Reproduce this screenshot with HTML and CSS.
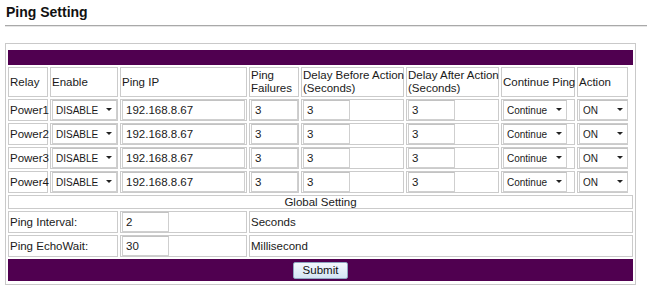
FILE: index.html
```html
<!DOCTYPE html>
<html lang="en">
<head>
    <meta charset="UTF-8">
    <title>Ping Setting</title>
    <link rel="stylesheet" href="styles.css">
</head>
<body>
<div class="page-title">Ping Setting</div>
<form class="panel">
    <table class="ping-table">
        <colgroup>
            <col class="c-relay">
            <col class="c-enable">
            <col class="c-ip">
            <col class="c-fail">
            <col class="c-before">
            <col class="c-after">
            <col class="c-cont">
            <col class="c-action">
            <col class="c-edge">
        </colgroup>
        <tr><td class="bar bar-top" colspan="9"></td></tr>
        <tr class="head">
            <th>Relay</th>
            <th>Enable</th>
            <th>Ping IP</th>
            <th>Ping<br>Failures</th>
            <th>Delay Before Action<br>(Seconds)</th>
            <th>Delay After Action<br>(Seconds)</th>
            <th>Continue Ping</th>
            <th>Action</th>
        </tr>
        <tr>
            <td>Power1</td>
            <td><span class="pick pick-enable"><select><option>DISABLE</option><option>ENABLE</option></select></span></td>
            <td><input class="ip" type="text" value="192.168.8.67"></td>
            <td><input class="num" type="text" value="3"></td>
            <td><input class="num" type="text" value="3"></td>
            <td><input class="num" type="text" value="3"></td>
            <td><span class="pick pick-cont"><select><option>Continue</option><option>Stop</option></select></span></td>
            <td><span class="pick pick-action"><select><option>ON</option><option>OFF</option></select></span></td>
        </tr>
        <tr>
            <td>Power2</td>
            <td><span class="pick pick-enable"><select><option>DISABLE</option><option>ENABLE</option></select></span></td>
            <td><input class="ip" type="text" value="192.168.8.67"></td>
            <td><input class="num" type="text" value="3"></td>
            <td><input class="num" type="text" value="3"></td>
            <td><input class="num" type="text" value="3"></td>
            <td><span class="pick pick-cont"><select><option>Continue</option><option>Stop</option></select></span></td>
            <td><span class="pick pick-action"><select><option>ON</option><option>OFF</option></select></span></td>
        </tr>
        <tr>
            <td>Power3</td>
            <td><span class="pick pick-enable"><select><option>DISABLE</option><option>ENABLE</option></select></span></td>
            <td><input class="ip" type="text" value="192.168.8.67"></td>
            <td><input class="num" type="text" value="3"></td>
            <td><input class="num" type="text" value="3"></td>
            <td><input class="num" type="text" value="3"></td>
            <td><span class="pick pick-cont"><select><option>Continue</option><option>Stop</option></select></span></td>
            <td><span class="pick pick-action"><select><option>ON</option><option>OFF</option></select></span></td>
        </tr>
        <tr>
            <td>Power4</td>
            <td><span class="pick pick-enable"><select><option>DISABLE</option><option>ENABLE</option></select></span></td>
            <td><input class="ip" type="text" value="192.168.8.67"></td>
            <td><input class="num" type="text" value="3"></td>
            <td><input class="num" type="text" value="3"></td>
            <td><input class="num" type="text" value="3"></td>
            <td><span class="pick pick-cont"><select><option>Continue</option><option>Stop</option></select></span></td>
            <td><span class="pick pick-action"><select><option>ON</option><option>OFF</option></select></span></td>
        </tr>
        <tr><td class="section" colspan="9">Global Setting</td></tr>
        <tr>
            <td colspan="2">Ping Interval:</td>
            <td><input class="num" type="text" value="2"></td>
            <td colspan="6">Seconds</td>
        </tr>
        <tr>
            <td colspan="2">Ping EchoWait:</td>
            <td><input class="num" type="text" value="30"></td>
            <td colspan="6">Millisecond</td>
        </tr>
        <tr><td class="bar bar-bottom" colspan="9"><button type="button" class="submit">Submit</button></td></tr>
    </table>
</form>
</body>
</html>
```
FILE: styles.css
```css
body {
    margin: 0;
    background-color: #ffffff;
    color: #1a1a1a;
    font-family: "Liberation Sans", Arial, sans-serif;
    font-size: 11.5px;
}
.page-title {
    margin-left: 5px;
    padding: 4px 0 5px 1px;
    font-size: 14px;
    font-weight: bold;
    line-height: 16px;
    color: #111;
    border-bottom: 1px solid #a9a9a9;
    box-shadow: 0 1px 0 #e6e6e6;
}
.panel {
    width: 631px;
    box-sizing: border-box;
    margin: 17px 0 0 5px;
    padding: 4px 0 1px;
    border: 1px solid #c9c9c9;
}
.ping-table {
    width: 629px;
    table-layout: fixed;
    border-spacing: 2px;
}
.c-relay { width: 40px; }
.c-enable { width: 68px; }
.c-ip { width: 127px; }
.c-fail { width: 50px; }
.c-before { width: 103px; }
.c-after { width: 93px; }
.c-cont { width: 74px; }
.c-action { width: 51px; }
.c-edge { width: 3px; }

.ping-table th,
.ping-table td {
    padding: 0 1px;
    border: 1px solid #cbcbcb;
    text-align: left;
    font-weight: normal;
    white-space: nowrap;
    overflow: visible;
    vertical-align: middle;
}
.ping-table td {
    height: 20px;
    line-height: 14px;
}
.ping-table .head th {
    height: 28px;
    line-height: 13px;
}
.ping-table .bar {
    border: none;
    padding: 0;
    background-color: #500050;
    text-align: center;
}
.ping-table .bar-top {
    height: 15px;
}
.ping-table .bar-bottom {
    height: 22px;
}
.ping-table .section {
    height: 12px;
    line-height: 12px;
    text-align: center;
}

input.num,
input.ip {
    display: block;
    height: 20px;
    box-sizing: border-box;
    padding: 0 3px;
    border: 1px solid #cfcfcf;
    border-top-color: #c2c2c2;
    background: #fff;
    color: #1a1a1a;
    font-family: "Liberation Sans", Arial, sans-serif;
    font-size: 11.5px;
}
input.num {
    width: 47px;
}
input.ip {
    width: 100%;
}

.pick {
    position: relative;
    display: block;
}
.pick select {
    display: block;
    width: 100%;
    height: 20px;
    box-sizing: border-box;
    padding: 0 0 0 3px;
    border: 1px solid #cfcfcf;
    border-top-color: #c2c2c2;
    border-radius: 0;
    background: #fff;
    color: #1a1a1a;
    font-family: "Liberation Sans", Arial, sans-serif;
    font-size: 10px;
    -webkit-appearance: none;
    appearance: none;
}
.pick::after {
    content: "";
    position: absolute;
    right: 5px;
    top: 8px;
    border-left: 3px solid transparent;
    border-right: 3px solid transparent;
    border-top: 3px solid #222;
    pointer-events: none;
}
.pick-enable { width: 65px; }
.pick-cont { width: 64px; }
.pick-action { width: 49px; }

.submit {
    width: 55px;
    height: 17px;
    padding: 0;
    border: 1px solid #8ea6bf;
    border-radius: 2px;
    background: linear-gradient(#f4f8fc, #d4e5f5);
    color: #111;
    font-family: "Liberation Sans", Arial, sans-serif;
    font-size: 11.5px;
    line-height: 15px;
    vertical-align: middle;
}
```
